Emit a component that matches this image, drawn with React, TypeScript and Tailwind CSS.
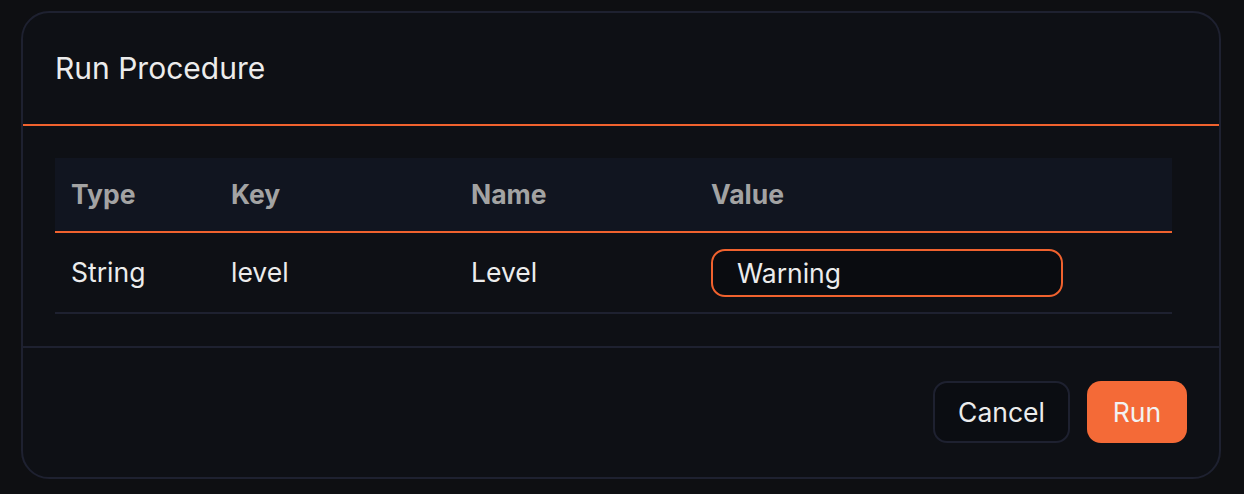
export default function App() {
  const font = { fontFamily: "Inter, 'Noto Sans', sans-serif" };
  return (
    <div
      className="min-h-screen w-full bg-[#0e0f12] pt-[11px] pl-[21px] pr-[23px] pb-[14px]"
      style={font}
    >
      <div className="flex h-[468px] flex-col rounded-[28px] border-2 border-[#1e2130] bg-[#0e1015]">
        <div className="flex h-[113px] items-center border-b-2 border-[#f0622e] px-8">
          <h2 className="text-[30px] font-normal text-[#ececec]">Run Procedure</h2>
        </div>

        <div className="pt-8 pb-8 pl-8 pr-[47px]">
          <table className="w-full table-fixed border-collapse">
            <thead>
              <tr className="h-[74px] border-b-2 border-[#f0622e] bg-[#111520]">
                <th className="w-[160px] px-4 text-left text-[26.5px] font-bold text-[#a3a3a3]">Type</th>
                <th className="w-[240px] px-4 text-left text-[26.5px] font-bold text-[#a3a3a3]">Key</th>
                <th className="w-[240px] px-4 text-left text-[26.5px] font-bold text-[#a3a3a3]">Name</th>
                <th className="px-4 text-left text-[26.5px] font-bold text-[#a3a3a3]">Value</th>
              </tr>
            </thead>
            <tbody>
              <tr className="h-[81px] border-b-2 border-[#1e2130]">
                <td className="px-4 text-[26.5px] text-[#ececec]">String</td>
                <td className="px-4 text-[26.5px] text-[#ececec]">level</td>
                <td className="px-4 text-[26.5px] text-[#ececec]">Level</td>
                <td className="px-4">
                  <input
                    defaultValue="Warning"
                    className="h-[48px] w-[352px] rounded-[14px] border-2 border-[#f0622e] bg-[#0a0c10] px-6 text-[26.5px] text-[#ececec] outline-none"
                    style={font}
                  />
                </td>
              </tr>
            </tbody>
          </table>
        </div>

        <div className="flex flex-1 items-center justify-end gap-[17px] border-t-2 border-[#1e2130] px-8 pb-[1px]">
          <button className="h-[62px] w-[137px] rounded-[14px] border-2 border-[#1e2130] bg-[#0b0d12] pt-[2px] text-[26.5px] text-[#ececec]">
            Cancel
          </button>
          <button className="h-[62px] w-[100px] rounded-[14px] bg-[#f46a37] pt-[2px] text-[26.5px] text-[#f2f2f2]">
            Run
          </button>
        </div>
      </div>
    </div>
  );
}
